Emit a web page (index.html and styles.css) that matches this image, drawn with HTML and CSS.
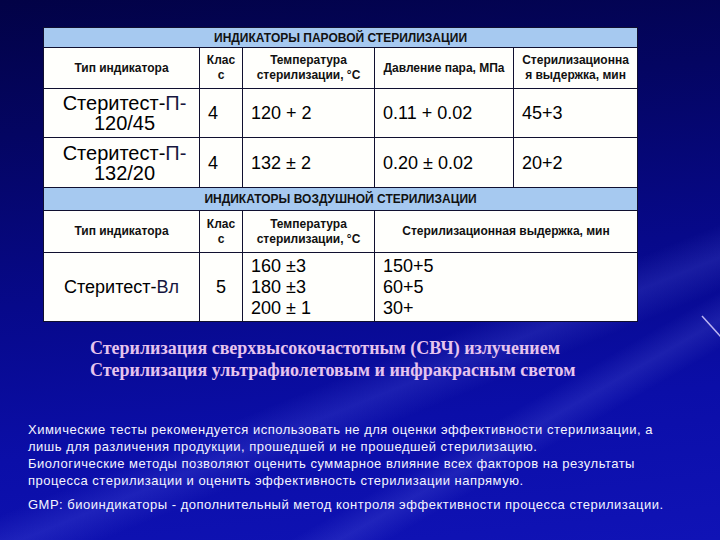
FILE: index.html
```html
<!DOCTYPE html>
<html lang="ru">
<head>
<meta charset="utf-8">
<title>Индикаторы стерилизации</title>
<link rel="stylesheet" href="styles.css">
</head>
<body>
<div class="slide">
  <div class="rays"></div>
  <svg class="streak" width="30" height="40" viewBox="0 0 30 40"><line x1="10" y1="8" x2="30" y2="30" stroke="#d8d0ff" stroke-width="1.5" opacity="0.85"/></svg>
  <table class="ind">
    <colgroup>
      <col class="c1"><col class="c2"><col class="c3"><col class="c4"><col class="c5">
    </colgroup>
    <tr class="r-title"><td colspan="5" class="title">ИНДИКАТОРЫ ПАРОВОЙ СТЕРИЛИЗАЦИИ</td></tr>
    <tr class="r-head">
      <td class="hd">Тип индикатора</td>
      <td class="hd">Клас<br>с</td>
      <td class="hd">Температура<br>стерилизации, °С</td>
      <td class="hd">Давление пара, МПа</td>
      <td class="hd">Стерилизационна<br>я выдержка, мин</td>
    </tr>
    <tr class="r-data1">
      <td class="name big">Стеритест-<span class="mark">П-</span><br>120/45</td>
      <td class="val">4</td>
      <td class="val">120 + 2</td>
      <td class="val">0.11 + 0.02</td>
      <td class="val">45+3</td>
    </tr>
    <tr class="r-data2">
      <td class="name big">Стеритест-<span class="mark">П-</span><br>132/20</td>
      <td class="val">4</td>
      <td class="val">132 ± 2</td>
      <td class="val">0.20 ± 0.02</td>
      <td class="val">20+2</td>
    </tr>
    <tr class="r-title2"><td colspan="5" class="title">ИНДИКАТОРЫ ВОЗДУШНОЙ СТЕРИЛИЗАЦИИ</td></tr>
    <tr class="r-head2">
      <td class="hd">Тип индикатора</td>
      <td class="hd">Клас<br>с</td>
      <td class="hd">Температура<br>стерилизации, °С</td>
      <td class="hd" colspan="2">Стерилизационная выдержка, мин</td>
    </tr>
    <tr class="r-data3">
      <td class="name">Стеритест-<span class="mark">Вл</span></td>
      <td class="val center">5</td>
      <td class="val multi">160 ±3<br>180 ±3<br>200 ± 1</td>
      <td class="val multi" colspan="2">150+5<br>60+5<br>30+</td>
    </tr>
  </table>
  <div class="methods">
    <p>Стерилизация сверхвысокочастотным (СВЧ) излучением</p>
    <p>Стерилизация ультрафиолетовым и инфракрасным светом</p>
  </div>
  <div class="notes">
    <p>Химические тесты рекомендуется использовать не для оценки эффективности стерилизации, а<br>лишь для различения продукции, прошедшей и не прошедшей стерилизацию.<br>Биологические методы позволяют оценить суммарное влияние всех факторов на результаты<br>процесса стерилизации и оценить эффективность стерилизации напрямую.</p>
    <p class="gmp">GMP: биоиндикаторы - дополнительный метод контроля эффективности процесса стерилизации.</p>
  </div>
</div>
</body>
</html>
```
FILE: styles.css
```css
html, body {
  margin: 0;
  padding: 0;
}
body {
  width: 720px;
  height: 540px;
  overflow: hidden;
}
.slide {
  position: relative;
  width: 720px;
  height: 540px;
  padding: 27px 0 0 0;
  box-sizing: border-box;
  background: linear-gradient(174deg, #020246 0%, #040562 22%, #07098a 50%, #0b0ea8 75%, #1013b6 100%);
  overflow: hidden;
  font-family: "Liberation Sans", Arial, sans-serif;
}
.rays {
  position: absolute;
  inset: 0;
  background:
    linear-gradient(158deg, transparent 0%, transparent 62%, rgba(120,130,255,0.16) 66%, transparent 70%),
    linear-gradient(150deg, transparent 0%, transparent 74%, rgba(140,150,255,0.14) 77%, transparent 80%);
  pointer-events: none;
}
.streak {
  position: absolute;
  left: 692px;
  top: 308px;
}
.ind {
  position: relative;
  margin-left: 43px;
  border-collapse: collapse;
  table-layout: fixed;
  width: 595px;
  background: #fffffc;
  color: #000;
}
.c1 { width: 156px; }
.c2 { width: 43px; }
.c3 { width: 132px; }
.c4 { width: 139px; }
.c5 { width: 124px; }
.ind td {
  border: 1px solid #101030;
  padding: 0;
  vertical-align: middle;
}
.r-title { height: 20px; }
.r-head { height: 41px; }
.r-data1 { height: 49px; }
.r-data2 { height: 50px; }
.r-title2 { height: 23px; }
.r-head2 { height: 42px; }
.r-data3 { height: 69px; }
.title {
  background: #a6c9f0;
  text-align: center;
  font-size: 12px;
  font-weight: bold;
  color: #111;
}
.hd {
  text-align: center;
  font-size: 12px;
  font-weight: bold;
  line-height: 15px;
  color: #111;
}
.name {
  text-align: center;
  font-size: 18px;
  line-height: 20px;
}
.name.big {
  font-size: 20px;
  line-height: 20px;
  padding-left: 6px;
}
.mark { color: #16163e; }
.val {
  font-size: 18px;
  line-height: 20px;
  padding-left: 8px !important;
}
.val.center {
  text-align: center;
  padding-left: 0 !important;
}
.val.multi { line-height: 21px; }
.methods {
  position: relative;
  margin: 15px 0 0 90px;
  font-family: "Liberation Serif", "Times New Roman", serif;
  font-weight: bold;
  font-size: 18px;
  line-height: 22px;
  color: #e6c4ee;
}
.methods p { margin: 0; }
.notes {
  position: relative;
  margin: 40px 0 0 28px;
  font-size: 13px;
  line-height: 17px;
  letter-spacing: 0.5px;
  color: #f4f4ff;
  white-space: nowrap;
}
.notes p { margin: 0; }
.notes .gmp { margin-top: 7px; }
```
